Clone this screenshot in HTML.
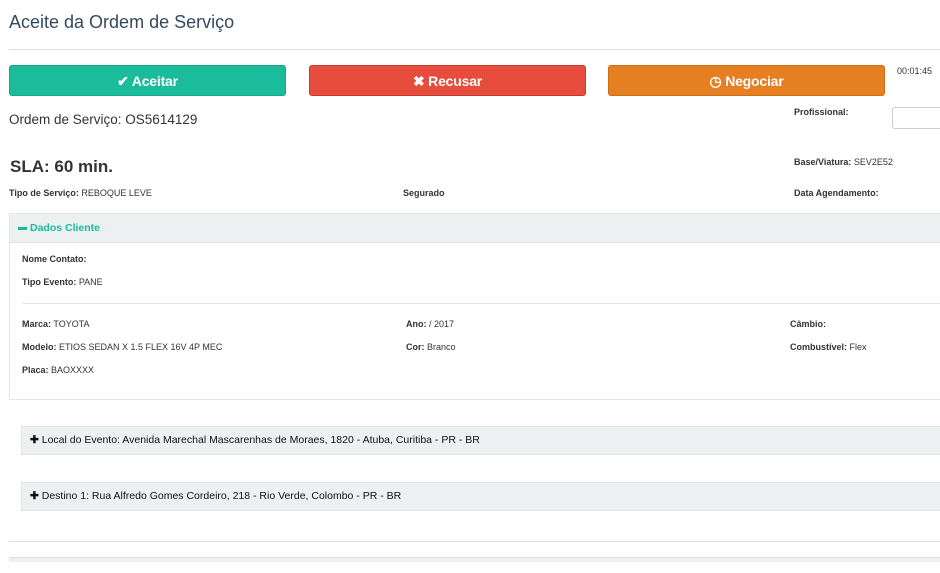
<!DOCTYPE html>
<html><head><meta charset="utf-8"><style>
*{box-sizing:border-box;margin:0;padding:0}
body{width:940px;height:573px;overflow:hidden;background:#fff;font-family:"Liberation Sans",Arial,sans-serif;color:#333;position:relative}
.a{position:absolute;white-space:nowrap}
.btn{position:absolute;top:65px;height:31px;border-radius:3px;color:#fff;font-weight:bold;font-size:14px;text-align:center;line-height:30px;letter-spacing:-0.2px}
.s{font-size:9px;color:#333}
b{font-weight:bold}
.bar{position:absolute;background:#ecf0f1;border:1px solid #dfe3e4;font-size:10.5px;color:#111;padding-left:8px;line-height:27px}
</style></head><body>
<div class="a" style="left:9px;top:12px;font-size:18px;color:#34495e">Aceite da Ordem de Serviço</div>
<div class="a" style="left:9px;top:49px;width:931px;height:1px;background:#dde"></div>
<div class="btn" style="left:9px;width:277px;background:#1abc9c;border:1px solid #18a689">&#10004; Aceitar</div>
<div class="btn" style="left:309px;width:277px;background:#e74c3c;border:1px solid #c9392b">&#10006; Recusar</div>
<div class="btn" style="left:608px;width:277px;background:#e67e22;border:1px solid #cf6d12">&#9719; Negociar</div>
<div class="a" style="left:897px;top:66px;font-size:9px;color:#333">00:01:45</div>
<div class="a" style="left:9px;top:112px;font-size:13.5px;color:#333">Ordem de Serviço: OS5614129</div>
<div class="a s" style="left:794px;top:107px"><b>Profissional:</b></div>
<div class="a" style="left:892px;top:107px;width:60px;height:22px;border:1px solid #ccc;border-radius:3px"></div>
<div class="a" style="left:10px;top:157px;font-size:17px;font-weight:bold;color:#333">SLA: 60 min.</div>
<div class="a s" style="left:794px;top:157px"><b>Base/Viatura:</b> SEV2E52</div>
<div class="a s" style="left:9px;top:188px"><b>Tipo de Serviço:</b> REBOQUE LEVE</div>
<div class="a s" style="left:403px;top:188px"><b>Segurado</b></div>
<div class="a s" style="left:794px;top:188px"><b>Data Agendamento:</b></div>
<div class="a" style="left:9px;top:213px;width:940px;height:187px;border:1px solid #e3e6e7"></div>
<div class="a" style="left:10px;top:214px;width:930px;height:29px;background:#ecf0f1;border-bottom:1px solid #dfe3e4"></div>
<div class="a" style="left:18px;top:227px;width:9px;height:3px;background:#1abc9c"></div>
<div class="a" style="left:30px;top:222px;font-size:10.5px;font-weight:bold;color:#1abc9c">Dados Cliente</div>
<div class="a s" style="left:22px;top:254px"><b>Nome Contato:</b></div>
<div class="a s" style="left:22px;top:277px"><b>Tipo Evento:</b> PANE</div>
<div class="a" style="left:22px;top:303px;width:918px;height:1px;background:#e3e6e7"></div>
<div class="a s" style="left:22px;top:319px"><b>Marca:</b> TOYOTA</div>
<div class="a s" style="left:406px;top:319px"><b>Ano:</b> / 2017</div>
<div class="a s" style="left:790px;top:319px"><b>Câmbio:</b></div>
<div class="a s" style="left:22px;top:342px"><b>Modelo:</b> ETIOS SEDAN X 1.5 FLEX 16V 4P MEC</div>
<div class="a s" style="left:406px;top:342px"><b>Cor:</b> Branco</div>
<div class="a s" style="left:790px;top:342px"><b>Combustível:</b> Flex</div>
<div class="a s" style="left:22px;top:365px"><b>Placa:</b> BAOXXXX</div>
<div class="bar" style="left:21px;top:426px;width:930px;height:29px"><b>&#10010;</b> Local do Evento: Avenida Marechal Mascarenhas de Moraes, 1820 - Atuba, Curitiba - PR - BR</div>
<div class="bar" style="left:21px;top:482px;width:930px;height:29px"><b>&#10010;</b> Destino 1: Rua Alfredo Gomes Cordeiro, 218 - Rio Verde, Colombo - PR - BR</div>
<div class="a" style="left:9px;top:541px;width:931px;height:1px;background:#e0e0e0"></div>
<div class="a" style="left:9px;top:557px;width:931px;height:5px;background:#ecf0f1;border-top:1px solid #ddd"></div>
</body></html>
